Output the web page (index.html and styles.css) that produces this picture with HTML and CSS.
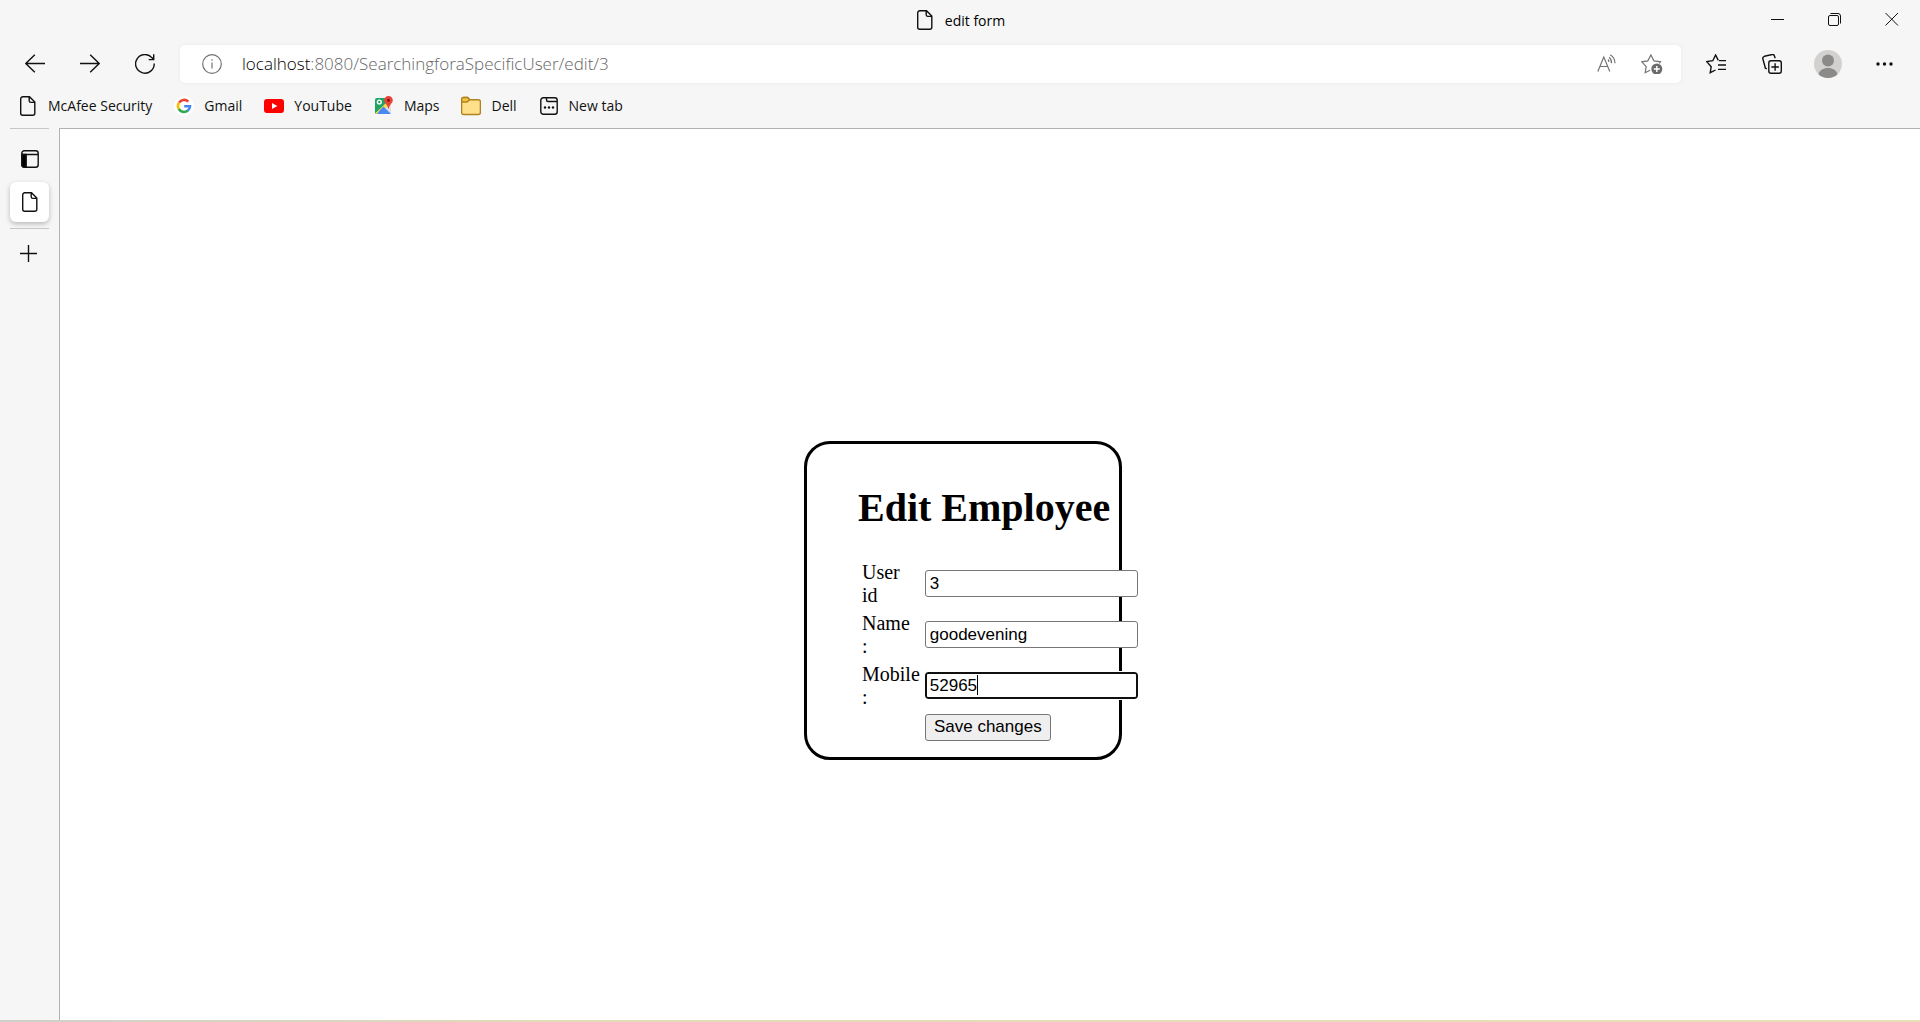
FILE: index.html
```html
<!DOCTYPE html>
<html lang="en">
<head>
<meta charset="utf-8">
<title>edit form</title>
<link rel="stylesheet" href="styles.css">
</head>
<body>
<svg class="defs" aria-hidden="true">
  <symbol id="doc" viewBox="0 0 20 20"><path d="M4.7.8h6.8l5.300 5.300v11.200a2 2 0 0 1-2 2H4.700a2 2 0 0 1-2-2v-14.500a2 2 0 0 1 2-2zM11.200 1v3.700a1.700 1.700 0 0 0 1.700 1.700h3.700"/></symbol>
</svg>
<header class="chrome">
  <div class="titlebar">
    <div class="title"><svg class="icon"><use href="#doc"/></svg><span>edit form</span></div>
    <div class="window-controls">
      <button aria-label="Minimize"><svg class="icon thin" viewBox="0 0 20 20"><path d="M3 10.500h13"/></svg></button>
      <button aria-label="Restore"><svg class="icon thin" viewBox="0 0 20 20"><rect x="3.500" y="6.500" width="10" height="10" rx="1.500"/><path d="M5.500 4.500h7.500a2.500 2.500 0 0 1 2.500 2.500v7.500"/></svg></button>
      <button aria-label="Close"><svg class="icon thin" viewBox="0 0 20 20"><path d="M3.500 4l12.500 12.500M16 4L3.500 16.500"/></svg></button>
    </div>
  </div>
  <div class="toolbar">
    <nav class="history">
      <button aria-label="Back"><svg class="icon" viewBox="0 0 20 20"><path d="M20 9.500H.8M9.800 .8L.8 9.500l9 8.700"/></svg></button>
      <button aria-label="Forward"><svg class="icon" viewBox="0 0 20 20"><path d="M0 9.500h19.200M10.200 .8l9 8.700-9 8.700"/></svg></button>
      <button aria-label="Refresh"><svg class="icon" viewBox="0 0 20 20"><path d="M19.200 9.500A9.300 9.300 0 1 1 16.800 3.600L18.700 5.500M18.700 .3v5.300h-5"/></svg></button>
    </nav>
    <div class="address">
      <svg class="icon muted" viewBox="0 0 20 20"><circle cx="10" cy="10" r="9.300"/><path d="M10 8.500v6M10 5.200v1.500"/></svg>
      <div class="url" role="textbox" aria-label="Address" contenteditable="true" spellcheck="false">localhost<span class="path">:8080/SearchingforaSpecificUser/edit/3</span></div>
      <button aria-label="Read aloud"><svg class="icon muted" viewBox="0 0 20 20"><path d="M.8 17.500L6.800 3l6 14.500M2.800 12.500h8M12.200 3.200a7 7 0 0 1 2.300 6M13.200 .8a10 10 0 0 1 4.800 8.400M11 5.500a4 4 0 0 1 .9 2.500"/></svg></button>
      <button aria-label="Add to favorites"><svg class="icon wide muted" viewBox="0 0 22 20"><path d="M9 16.200L4.200 18.700l1-6L.8 7.800l6-.9L9.900 1l3.100 5.900 6.500.9-1.200 1.700"/><circle class="fill" cx="15.800" cy="15" r="5.500"/><path class="white" d="M12.800 15h6M15.800 12v6"/></svg></button>
    </div>
    <div class="actions">
      <button aria-label="Favorites"><svg class="icon" viewBox="0 0 20 20"><path d="M9.500 16L4.200 18.700l1-6L.8 7.600l6-.9L9.600 1l2.700 5.400M13 6.600h7M12 11h8M12 15.400h8"/></svg></button>
      <button aria-label="Collections"><svg class="icon" viewBox="0 0 20 20"><rect x="6.800" y="6.700" width="12.500" height="12.500" rx="2.200"/><path d="M9.300 13h7.600M13.100 9.200v7.600M4.800 14.800L3.400 14.200 .9 5a2.200 2.200 0 0 1 1.500-2.700L10.200.5a2 2 0 0 1 2.300 1.500l.6 2.200"/></svg></button>
      <button aria-label="Profile"><svg class="avatar" viewBox="0 0 28 28"><circle cx="14" cy="14" r="14" fill="#d3d1cf"/><circle cx="14" cy="10.500" r="6" fill="#8c8a88"/><path d="M4.500 24.200c1.200-4 4.700-6.200 9.500-6.200s8.300 2.200 9.500 6.200A14 14 0 0 1 14 28a14 14 0 0 1-9.500-3.800z" fill="#8c8a88"/></svg></button>
      <button aria-label="Settings and more"><svg class="icon" viewBox="0 0 20 20"><g class="dots"><circle cx="4" cy="10" r="1.700"/><circle cx="10.500" cy="10" r="1.700"/><circle cx="17" cy="10" r="1.700"/></g></svg></button>
    </div>
  </div>
  <nav class="bookmarks">
    <a href="#"><svg class="icon"><use href="#doc"/></svg>McAfee Security</a>
    <a href="#"><svg class="icon google" viewBox="0 0 20 20"><circle cx="10" cy="10" r="10" fill="#fff" stroke="none"/><path d="M5 6.600A6 6 0 0 1 14.300 5.700" stroke="#ea4335"/><path d="M4.900 13.200a6 6 0 0 1 0-6.400" stroke="#fbbc05"/><path d="M13.900 14.500A6 6 0 0 1 4.800 13" stroke="#34a853"/><path d="M10.200 10.200h5.800a6 6 0 0 1-2.200 4.400" stroke="#4285f4"/></svg>Gmail</a>
    <a href="#"><svg class="icon plain" viewBox="0 0 20 20"><rect y="3" width="20" height="14" rx="3" fill="#f00"/><path d="M8 7l5.300 3L8 13z" fill="#fff"/></svg>YouTube</a>
    <a href="#"><svg class="icon plain" viewBox="0 0 20 20"><rect x="1" y="2" width="16" height="16" rx="2" fill="#dfe1e5"/><path d="M1 4a2 2 0 0 1 2-2h10l-1 6L1 18z" fill="#1fa463"/><path d="M1.200 17.500L14 5l2 3L5 18H2z" fill="#ffd84d"/><path d="M6 14l3.500-3.500L17 18H3z" fill="#4a89f3"/><circle cx="5.300" cy="6" r="1.900" fill="none" stroke="#fff"/><path d="M14.500 0a4.300 4.300 0 0 1 4.300 4.300c0 3-3.300 4-4.300 9.200-1-5.200-4.300-6.200-4.300-9.200A4.300 4.300 0 0 1 14.500 0z" fill="#e94335"/><circle cx="14.500" cy="4.300" r="1.500" fill="#811411"/></svg>Maps</a>
    <a href="#"><svg class="icon plain" viewBox="0 0 20 20"><path d="M.6 16.500V3.500a2 2 0 0 1 2-2h4l2 2.300h8.800a2 2 0 0 1 2 2v10.700a2 2 0 0 1-2 2H2.600a2 2 0 0 1-2-2z" fill="#ffe08a" stroke="#ae8222"/><path d="M.8 6h5.300l2.500-2.200-2-2.300h-4a2 2 0 0 0-2 2z" fill="#f5c33b" stroke="#ae8222"/></svg>Dell</a>
    <a href="#"><svg class="icon" viewBox="0 0 20 20"><rect x="1.800" y="1.800" width="16.400" height="16.400" rx="2.500"/><path d="M7.500 2v2a1.500 1.500 0 0 0 1.500 1.500h9"/><g class="dots"><circle cx="6" cy="11.500" r="1.200"/><circle cx="10" cy="11.500" r="1.200"/><circle cx="14" cy="11.500" r="1.200"/></g></svg>New tab</a>
  </nav>
</header>
<div class="workspace">
  <aside class="tabs">
    <button aria-label="Tab actions"><svg class="icon" viewBox="0 0 20 20"><rect x="1.800" y="1.800" width="16.400" height="16.400" rx="2.500"/><path d="M2 5.500h16M6 6v12"/><path class="ink" d="M2 5.500h4V18H4a2 2 0 0 1-2-2z"/></svg></button>
    <button class="current" aria-label="edit form"><svg class="icon"><use href="#doc"/></svg></button>
    <button class="add" aria-label="New tab"><svg class="icon" viewBox="0 0 20 20"><path d="M0 9.500h17M8.500 1v17"/></svg></button>
  </aside>
  <main class="page">
    <form class="card">
      <h1>Edit Employee</h1>
      <table>
        <tr><td><label for="uid">User id</label></td><td><input id="uid" type="text" value="3"></td></tr>
        <tr><td><label for="name">Name :</label></td><td><input id="name" type="text" value="goodevening"></td></tr>
        <tr><td><label for="mobile">Mobile :</label></td><td><div class="field"><input id="mobile" class="active" type="text" value="52965"><i class="caret"></i></div></td></tr>
        <tr><td></td><td><button type="button">Save changes</button></td></tr>
      </table>
    </form>
  </main>
</div>
<footer class="edge"></footer>
</body>
</html>
```

FILE: styles.css
```css
* { box-sizing: border-box; }

body {
  margin: 0;
  min-height: 100vh;
  display: flex;
  flex-direction: column;
  background: #f6f6f6;
  color: #000;
  font-family: "Open Sans", "Noto Sans", sans-serif;
  font-size: 14px;
}

.defs { position: absolute; width: 0; height: 0; }

.chrome button, .tabs button {
  display: flex;
  align-items: center;
  justify-content: center;
  padding: 0;
  border: 0;
  background: none;
}

.icon {
  flex: none;
  width: 20px;
  height: 20px;
  fill: none;
  stroke: #111;
  stroke-width: 1.4;
}
.icon.wide { width: 22px; }
.icon.thin { stroke-width: 1; }
.icon.muted { stroke: #737373; stroke-width: 1.2; }
.icon.google { stroke-width: 2.6; }
.icon.plain { stroke: none; }
.fill { fill: #6b6b6b; stroke: none; }
.white { stroke: #fff; stroke-width: 1.4; }
.ink { fill: #000; }
.dots { fill: #111; stroke: none; }

.titlebar {
  display: grid;
  grid-template-columns: 1fr auto 1fr;
  height: 40px;
}
.title { grid-column: 2; display: flex; align-items: center; gap: 10px; }
.window-controls { display: flex; justify-content: flex-end; }
.window-controls button { width: 57px; height: 38px; }

.toolbar {
  display: flex;
  align-items: center;
  gap: 20px;
  height: 48px;
  padding: 0 21px 0 20px;
}
.history { display: flex; gap: 25px; }
.actions { display: flex; gap: 26px; }
.history button, .actions button { width: 30px; height: 30px; }
.avatar { width: 28px; height: 28px; }

.address {
  flex: 1;
  display: flex;
  align-items: center;
  gap: 24px;
  height: 38px;
  padding: 0 18px 0 22px;
  border-radius: 5px;
  background: #fff;
  box-shadow: 0 0 4px rgba(0, 0, 0, .06);
}
.url {
  flex: 1;
  margin-left: -4px;
  padding-bottom: 2px;
  font-size: 17px;
  font-weight: 300;
  outline: 0;
}
.path { color: #666; }

.bookmarks {
  display: flex;
  align-items: center;
  gap: 22px;
  height: 40px;
  padding: 0 18px 5px;
}
.bookmarks a {
  display: flex;
  align-items: center;
  gap: 10px;
  color: #111;
  text-decoration: none;
}

.workspace { flex: 1; display: flex; }

.tabs {
  display: flex;
  flex-direction: column;
  width: 39px;
  margin: 0 10px;
  border-top: 1px solid #c6c6c6;
}
.tabs button { height: 40px; }
.tabs button:first-child { margin: 10px 0 3px; }
.tabs .current {
  border-radius: 6px;
  background: #fff;
  box-shadow: 0 2px 5px rgba(0, 0, 0, .25);
}
.tabs .add {
  height: 50px;
  margin-top: 6px;
  border-top: 1px solid #c6c6c6;
}

.page {
  flex: 1;
  display: grid;
  grid-template: 35% auto / 40% auto;
  justify-content: start;
  align-content: start;
  border: solid #b3b3b3;
  border-width: 1px 0 0 1px;
  background: #fff;
  font-family: "Liberation Serif", "Times New Roman", serif;
  font-size: 20px;
  line-height: 23px;
}

.card {
  grid-area: 2 / 2;
  width: 318px;
  padding: 14px 0 12px 51px;
  border: 3px solid #000;
  border-radius: 26px;
}
.card h1 { margin: 27px 0 26px; font-size: 40px; line-height: 46px; }
.card table { width: 264px; border-spacing: 3px; }
.card td { padding: 1px; }
.card td:first-child { width: 57px; }
.card input, .card button {
  display: block;
  height: 27px;
  border: 1px solid #767676;
  border-radius: 3px;
  color: #000;
  font-family: "Liberation Sans", Arial, sans-serif;
  font-size: 17px;
}
.card input { width: 213px; padding: 0 4px; background: #fff; }
.card .active { border: 2px solid #101010; padding: 0 3px; outline: 1px solid #fff; }
.card button { width: 126px; padding: 0; background: #efefef; white-space: nowrap; }

.field { position: relative; width: 213px; }
.caret { position: absolute; left: 52px; top: 3px; width: 1px; height: 20px; background: #000; }

.edge { height: 2px; background: linear-gradient(90deg, #ccd0c8, #e2dcb8 30%, #e8dfb4); }
```
